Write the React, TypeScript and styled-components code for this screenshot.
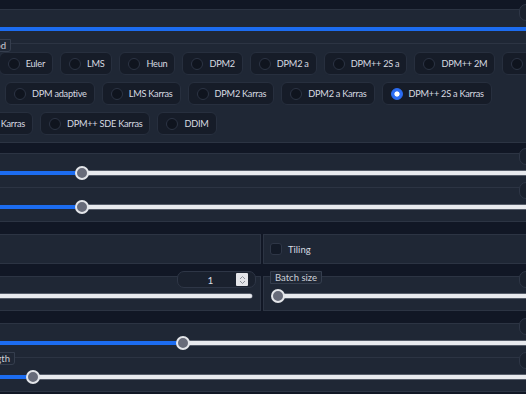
import React from "react";
import styled, {createGlobalStyle} from "styled-components";

const GlobalStyle = createGlobalStyle`
  html, body {
    margin: 0;
    padding: 0;
    overflow: hidden;
    background: #111725;
  }
  body {
    font-family: Lato, "Liberation Sans", sans-serif;
    color: #d4d8df;
  }
`;

const Page = styled.div`
  width: 640px;
  margin-left: -40px;
  padding-top: 9px;
  display: flex;
  flex-direction: column;
`;

const Panel = styled.div<{ $mt?: number }>`
  margin-top: ${p => p.$mt || 0}px;
  background: #1f2735;
  border: 1px solid #2c3443;
`;

const Split = styled.div<{ $mt?: number }>`
  margin-top: ${p => p.$mt || 0}px;
  display: grid;
  grid-template-columns: 301px 1fr;
  gap: 2px;
`;

const Cell = styled(Panel)`
  min-height: 28px;
  display: flex;
  align-items: center;
`;

const SliderBlock = styled.div<{ $divided?: boolean }>`
  display: flow-root;
  height: 33px;
  border-top: ${p => (p.$divided ? "1px solid #2c3443" : "none")};
`;

const Header = styled.div`
  display: flex;
  justify-content: space-between;
  align-items: flex-start;
  height: 17px;
  margin-top: -6px;
  padding-right: 4px;
`;

const LabelWrap = styled.div<{ $w: number }>`
  width: ${p => p.$w}px;
  display: flex;
  justify-content: flex-end;
  flex-shrink: 0;
`;

const Label = styled.span<{ $ml?: number }>`
  margin-left: ${p => p.$ml || 0}px;
  height: 13px;
  padding: 0 4px;
  box-sizing: border-box;
  font-size: 9.5px;
  line-height: 11px;
  color: #cdd1d8;
  white-space: nowrap;
  background: #1f2735;
  border: 1px solid #353e4e;
  border-radius: 0 0 3px 0;
  flex-shrink: 0;
`;

const NumberBox = styled.div<{ $w: number }>`
  margin-left: auto;
  width: ${p => p.$w}px;
  height: 17px;
  box-sizing: border-box;
  display: flex;
  align-items: center;
  padding: 0 7px;
  background: #1a212e;
  border: 1px solid #2e3646;
  border-radius: 7px;
  font-size: 10px;
  color: #d9dce2;
`;

const NumberValue = styled.span`
  flex: 1;
  text-align: center;
`;

const Spinner = styled.span`
  width: 12px;
  height: 13px;
  background: #e4e5e9;
  border-radius: 1px;
  display: flex;
  align-items: center;
  justify-content: center;
`;

const TrackRow = styled.div<{ $pr?: number }>`
  display: flex;
  align-items: center;
  height: 14px;
  margin-top: 1px;
  padding: 0 ${p => p.$pr ?? 0}px 0 8px;
`;

const Fill = styled.div`
  height: 4px;
  background: #1c6cf0;
  border-radius: 2px 0 0 2px;
  flex-shrink: 0;
`;

const Thumb = styled.div`
  width: 14px;
  height: 14px;
  margin: 0 -7px;
  box-sizing: border-box;
  border-radius: 50%;
  background: #676b79;
  border: 2px solid #e3e5e9;
  position: relative;
  z-index: 1;
  flex-shrink: 0;
`;

const Rail = styled.div`
  flex: 1;
  height: 4px;
  background: #e8eaee;
  border-radius: 0 2px 2px 0;
  box-shadow: 0 0 0 0.5px #8d93a0;
`;

const RadioBlock = styled.div`
  border-top: 1px solid #2c3443;
  padding-bottom: 7px;
`;

const Rows = styled.div`
  display: flex;
  flex-direction: column;
  gap: 7px;
`;

const Row = styled.div`
  display: flex;
  gap: 7px;
`;

const Lead = styled.div<{ $w: number }>`
  width: ${p => p.$w}px;
  display: flex;
  justify-content: flex-end;
  flex-shrink: 0;
`;

const Choice = styled.label`
  display: flex;
  align-items: center;
  gap: 6px;
  height: 23px;
  padding: 0 7px 0 8px;
  box-sizing: border-box;
  background: #161c28;
  border: 1px solid #272f3e;
  border-radius: 6px;
  font-size: 9.2px;
  letter-spacing: -0.25px;
  color: #d6dae1;
  white-space: nowrap;
  flex-shrink: 0;
`;

const Dot = styled.span<{ $on?: boolean }>`
  width: 12px;
  height: 12px;
  border-radius: 50%;
  box-sizing: border-box;
  flex-shrink: 0;
  background: ${p => (p.$on ? "radial-gradient(circle, #ffffff 0 2.2px, #2b6cf2 3px)" : "#0f141e")};
  border: 1px solid ${p => (p.$on ? "#2b6cf2" : "#2c3444")};
`;

const Check = styled.span`
  width: 12px;
  height: 12px;
  box-sizing: border-box;
  margin-left: 6px;
  background: #131a27;
  border: 1px solid #2e3646;
  border-radius: 3px;
`;

const CheckText = styled.span`
  margin-left: 6px;
  font-size: 9.5px;
  color: #d6dae1;
`;

const Radio = ({ name, on }: { name: string; on?: boolean }) => (
  <Choice>
    <Dot $on={on} />
    {name}
  </Choice>
);

const Slider = ({ fill, thumb = true, pr }: { fill: number; thumb?: boolean; pr?: number }) => (
  <TrackRow $pr={pr}>
    <Fill style={{ width: fill }} />
    {thumb && <Thumb />}
    <Rail />
  </TrackRow>
);

const Chevrons = () => (
  <svg width="7" height="10" viewBox="0 0 7 10">
    <path d="M1 4 L3.5 1.5 L6 4 M1 6 L3.5 8.5 L6 6" fill="none" stroke="#8b8f98" strokeWidth="1" />
  </svg>
);

const App: React.FC = () => {
  return (
    <>
      <GlobalStyle />
      <Page>
        <Panel>
          <SliderBlock>
            <Header>
              <NumberBox $w={76} />
            </Header>
            <Slider fill={700} thumb={false} />
          </SliderBlock>
          <RadioBlock>
            <LabelWrap $w={50} style={{ marginTop: -5 }}>
              <Label>Sampling method</Label>
            </LabelWrap>
            <Rows>
              <Row>
                <Lead $w={92}>
                  <Radio name="Euler" />
                </Lead>
                <Radio name="LMS" />
                <Radio name="Heun" />
                <Radio name="DPM2" />
                <Radio name="DPM2 a" />
                <Radio name="DPM++ 2S a" />
                <Radio name="DPM++ 2M" />
                <Radio name="DPM++ SDE" />
              </Row>
              <Row>
                <Lead $w={37}>
                  <Radio name="DPM fast" />
                </Lead>
                <Radio name="DPM adaptive" />
                <Radio name="LMS Karras" />
                <Radio name="DPM2 Karras" />
                <Radio name="DPM2 a Karras" />
                <Radio name="DPM++ 2S a Karras" on />
              </Row>
              <Row>
                <Lead $w={72}>
                  <Radio name="DPM++ 2M Karras" />
                </Lead>
                <Radio name="DPM++ SDE Karras" />
                <Radio name="DDIM" />
              </Row>
            </Rows>
          </RadioBlock>
        </Panel>

        <Panel $mt={10}>
          <SliderBlock>
            <Header>
              <NumberBox $w={76} />
            </Header>
            <Slider fill={113} />
          </SliderBlock>
          <SliderBlock $divided>
            <Header>
              <NumberBox $w={76} />
            </Header>
            <Slider fill={113} />
          </SliderBlock>
        </Panel>

        <Split $mt={12}>
          <Cell />
          <Cell>
            <Check />
            <CheckText>Tiling</CheckText>
          </Cell>
        </Split>

        <Split $mt={12}>
          <Panel>
            <SliderBlock>
              <Header>
                <NumberBox $w={79}>
                  <NumberValue>1</NumberValue>
                  <Spinner>
                    <Chevrons />
                  </Spinner>
                </NumberBox>
              </Header>
              <Slider fill={0} pr={8} />
            </SliderBlock>
          </Panel>
          <Panel>
            <SliderBlock>
              <Header>
                <Label $ml={6}>Batch size</Label>
                <NumberBox $w={76} />
              </Header>
              <Slider fill={6} />
            </SliderBlock>
          </Panel>
        </Split>

        <Panel $mt={12}>
          <SliderBlock>
            <Header>
              <NumberBox $w={76} />
            </Header>
            <Slider fill={214} />
          </SliderBlock>
          <SliderBlock $divided>
            <Header>
              <LabelWrap $w={54}>
                <Label>Denoising strength</Label>
              </LabelWrap>
              <NumberBox $w={76} />
            </Header>
            <Slider fill={64} />
          </SliderBlock>
        </Panel>
      </Page>
    </>
  );
};

export default App;
